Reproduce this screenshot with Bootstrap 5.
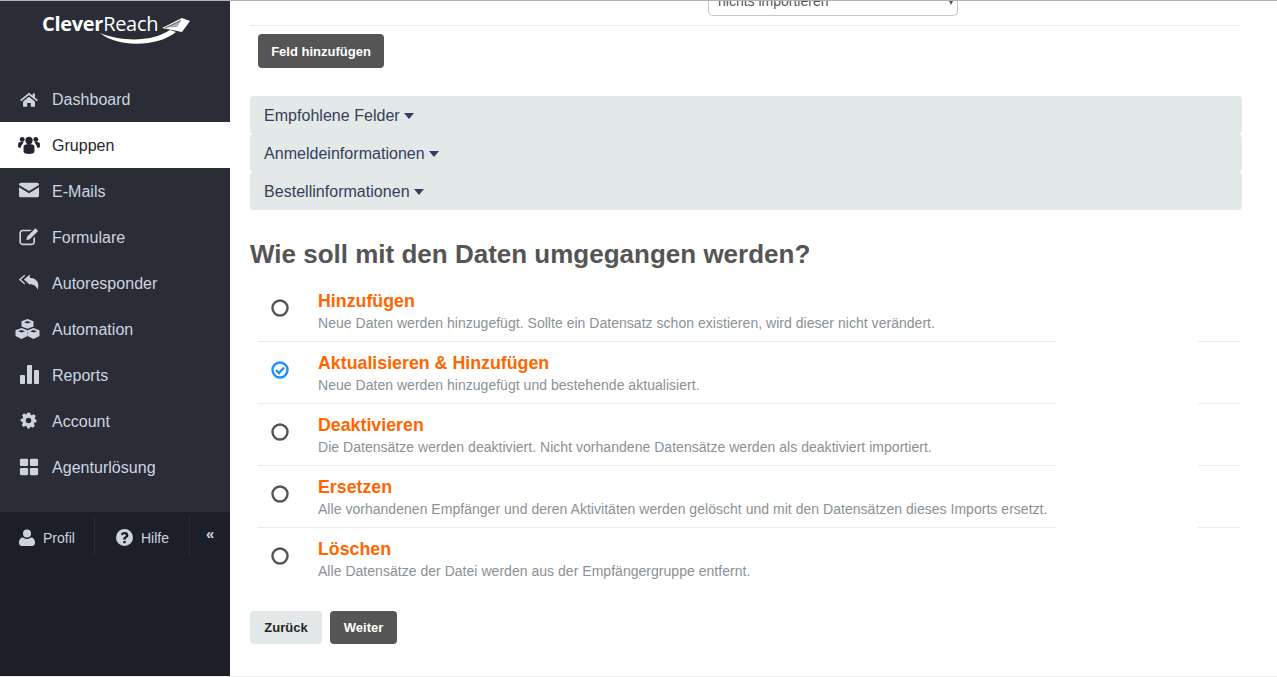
<!DOCTYPE html>
<html lang="de">
<head>
<meta charset="utf-8">
<title>CleverReach</title>
<link rel="stylesheet" href="https://cdn.jsdelivr.net/npm/bootstrap@5.3.0/dist/css/bootstrap.min.css">
<style>
html,body{height:677px;overflow:hidden;background:#fff;font-family:"Liberation Sans",Arial,sans-serif}
.shell{height:677px;border-top:1px solid #b2b2b2;border-bottom:1px solid #ececec}
.side{width:230px;flex:none;background:#2a2d36;height:675px}
.brand{height:75px;color:#fff;padding:9px 0 0 42px}
.logo-t{font-family:"Open Sans",sans-serif;font-size:20px;line-height:28px;letter-spacing:-.3px;color:#fff}
.logo-t b{font-weight:700}
.logo-g{left:0;top:0}
.menu-i{height:46px;padding:2px 0 0 18px;color:#cdd4e0;font-size:16px;text-decoration:none;letter-spacing:.03px}
.menu-i svg{width:22px;height:20px;flex:none;margin:-2px 12px 0 0;fill:#cdd4e0}
.menu-i.on{background:#fff;color:#23262e}
.menu-i.on svg{fill:#23262e}
.menu-i svg.wide{margin-left:-3px;width:25px}
.foot{margin-top:auto;height:164px;background:#1c1f27;color:#cdd4e0;font-size:14px;padding-top:4px}
.foot-c{height:40px;border-right:1px solid #282b33;padding-top:4px}
.foot-c svg{fill:#cdd4e0;margin-top:-2px}
.c1{width:95px;padding-left:19px}
.c2{width:95px;padding-left:21px}
.c3{width:39px;padding:0 0 3px 16px;border-right:0;font-size:15px;font-weight:700}
.work{flex:1;padding:0 37px 0 20px;min-width:0}
.top-r{height:25px;border-bottom:1px solid #ebebeb;margin-bottom:8px;overflow:hidden;position:relative}
.sel-x{width:250px;height:34px;margin-left:458px;margin-top:-19px;border:1px solid #c4c4c4;border-radius:0 0 5px 5px;border-top:0;font-size:14px;color:#555;padding:0 0 0 9px;line-height:17px;background:#fff}
.sel-s{position:relative;top:3px}
.sel-a{width:0;height:0;border-left:3.5px solid transparent;border-right:3.5px solid transparent;border-top:6px solid #555;margin-right:3px;position:relative;top:3px}
.btn-dk{background:#555;color:#fff;font-size:13px;font-weight:700;border:0;border-radius:4px;padding:1px 0 0;height:34px;line-height:33px;width:126px}
.btn-dk:hover{background:#555;color:#fff}
.btn-lt{background:#e3e8e8;color:#24262b;font-size:13px;font-weight:700;border:0;border-radius:4px;padding:1px 0 0;height:33px;line-height:32px;width:72px}
.btn-nx{width:67px;height:33px;line-height:32px}
.acc-w{margin-top:28px;margin-right:-2px}
.acc-b{height:38px;background:#e3e8e8;border-radius:4px;color:#34405a;font-size:16px;padding-left:14px;line-height:39.500px;letter-spacing:.03px}
.acc-b::after{margin-left:4px;vertical-align:2px;border-top-width:6px;border-left-width:5px;border-right-width:5px}
.hd{font-size:26px;font-weight:700;color:#555;margin:0;height:70px;line-height:88px}
.opt-l{margin-left:8px;height:61px;padding-top:10px}
.rad{width:60px;flex:none;padding:8.500px 0 0 13px}
.rad svg{display:block}
.opt-t{font-size:17.800px;font-weight:700;color:#f60;line-height:22px}
.opt-d{font-size:14px;color:#8a9196;line-height:22.500px;white-space:nowrap;letter-spacing:.03px}
.sep-a{margin-left:8px;height:1px}
.sep-a i{display:block;height:1px;background:#ebebeb}
.sep-1{width:799px}
.sep-2{width:42px;margin-left:141px}
.acts{margin-top:22px}
</style>
</head>
<body>
<div class="shell d-flex">
  <nav class="side d-flex flex-column">
    <div class="brand position-relative">
      <span class="logo-t"><b>Clever</b>Reach</span>
      <svg class="logo-g position-absolute" width="230" height="75" viewBox="0 0 230 75"><path d="M100 32C120 40 150 42 170 29L176 31C158 46 118 47 100 32Z" fill="#fff"/><path d="M162 27 182 17 190 20 182 31Z" fill="#fff"/><path d="M167 26.500 181 20 177 26Z" fill="#2a2d36" opacity=".4"/><path d="M165 27 181 19.500" stroke="#2a2d36" stroke-width=".8" fill="none"/></svg>
    </div>
    <a class="menu-i d-flex align-items-center" href="#"><svg viewBox="-2.500 -3 29 27"><path d="M12 2 0 12l1.400 1.700L12 5l10.600 8.700L24 12l-4-3.300V3h-3v3.200zM4 14v7h5.500v-5h5v5H20v-7l-8-6.500z"/></svg>Dashboard</a>
    <a class="menu-i on d-flex align-items-center" href="#"><svg viewBox="0 0 24 22"><circle cx="12" cy="6" r="4"/><circle cx="4.500" cy="5" r="2.700"/><circle cx="19.500" cy="5" r="2.700"/><path d="M6 13c0-2 2-3 6-3s6 1 6 3v5c0 2-2 3-6 3s-6-1-6-3zM0 10c0-1.500 1-2.300 3-2.300h3c-.6.800-1 1.500-1 2.500-1.200.8-2 2-2 3.800H1c-.6 0-1-.5-1-1zM24 10c0-1.500-1-2.300-3-2.300h-3c.6.800 1 1.500 1 2.500 1.200.8 2 2 2 3.800h2c.6 0 1-.5 1-1z"/></svg>Gruppen</a>
    <a class="menu-i d-flex align-items-center" href="#"><svg viewBox="-1 0 24 22"><path d="M2 2h18c1 0 2 1 2 2v.5L11 11 0 4.500V4c0-1 1-2 2-2zM0 7l11 6.500L22 7v9c0 1-1 2-2 2H2c-1 0-2-1-2-2z"/></svg>E-Mails</a>
    <a class="menu-i d-flex align-items-center" href="#"><svg viewBox="-1 0 24 22"><path d="M4 3h10l-2 1.800H4c-1 0-1.800.8-1.800 1.800v9.800c0 1 .8 1.800 1.800 1.800h10c1 0 1.800-.8 1.800-1.800v-4l1.800-1.800v6c0 2-1.600 3.400-3.600 3.400H4c-2 0-3.600-1.400-3.600-3.400V6.600C.4 4.600 2 3 4 3z"/><path d="M18 1.500 21 4.500 12 13.500 8 14.500 9 10.500z"/></svg>Formulare</a>
    <a class="menu-i d-flex align-items-center" href="#"><svg viewBox="-1 0 26 22"><path d="M7 1v2L2.500 7 7 11v2L0 7z"/><path d="M13 1v4c6 0 10 3 10 9 0 2-.6 3.500-1 5-1-4-4-6.500-9-6.500V13L6 7z"/></svg>Autoresponder</a>
    <a class="menu-i d-flex align-items-center" href="#"><svg class="wide" viewBox="1 1 24 20"><path d="M13 1l6 2.300v5.200l-6 2.300-6-2.300V3.300zM13 3 9.500 4.300 13 5.600l3.500-1.300z" fill-rule="evenodd"/><path d="M7 10l6 2.300v5.700l-6 3-6-3v-5.700zM7 12 3.500 13.300 7 14.600l3.500-1.300z" fill-rule="evenodd"/><path d="M19 10l6 2.300v5.700l-6 3-6-3v-5.700zM19 12l-3.500 1.300 3.500 1.300 3.500-1.300z" fill-rule="evenodd"/></svg>Automation</a>
    <a class="menu-i d-flex align-items-center" href="#"><svg viewBox="0 0 22 20"><rect x="2" y="10" width="5" height="9" rx="1"/><rect x="9" y="0" width="5" height="19" rx="1"/><rect x="16" y="5" width="5" height="14" rx="1"/></svg>Reports</a>
    <a class="menu-i d-flex align-items-center" href="#"><svg viewBox="-2 -2 26 24"><path fill-rule="evenodd" d="M9 1h4l.6 2.600 1.700.7 2.300-1.400 2.500 2.500-1.400 2.300.7 1.700L21 10v3l-2.600.6-.7 1.700 1.400 2.300-2.500 2.500-2.300-1.400-1.700.7L12.500 21h-3l-.6-2.600-1.700-.7-2.300 1.400-2.500-2.500 1.400-2.300-.7-1.700L1 12V9l2.600-.6.7-1.700L2.900 4.400l2.500-2.500 2.300 1.400 1.100-.4zM11 7.500a3.500 3.500 0 1 0 0 7 3.500 3.500 0 0 0 0-7z" transform="translate(0 -1) scale(.95)"/></svg>Account</a>
    <a class="menu-i d-flex align-items-center" href="#"><svg viewBox="-1 -1 24 22"><rect x="1" y="1" width="9" height="8" rx="1.500"/><rect x="12" y="1" width="9" height="8" rx="1.500"/><rect x="1" y="11" width="9" height="8" rx="1.500"/><rect x="12" y="11" width="9" height="8" rx="1.500"/></svg>Agenturlösung</a>
    <div class="foot d-flex align-items-start">
      <div class="foot-c c1 d-flex align-items-center gap-2"><svg width="16" height="17" viewBox="0 0 16 17"><circle cx="8" cy="4.500" r="4"/><path d="M0 14c0-4 2-5.500 4-5.500 1 .9 2.400 1.400 4 1.400s3-.5 4-1.400c2 0 4 1.500 4 5.500 0 2-1.500 3-3 3H3c-1.500 0-3-1-3-3z"/></svg>Profil</div>
      <div class="foot-c c2 d-flex align-items-center gap-2"><svg width="17" height="17" viewBox="0 0 17 17"><path fill-rule="evenodd" d="M8.500 0a8.500 8.500 0 1 1 0 17 8.500 8.500 0 0 1 0-17zM7.300 12v2.200h2.400V12zM8.700 3C6.800 3 5.500 3.900 4.800 5.200l1.600 1.200c.5-.7 1-1.200 2-1.200.8 0 1.400.4 1.400 1 0 .7-.5 1-1.300 1.500-.9.500-1.200 1.200-1.200 2.200v.8h2.400v-.6c0-.5.2-.7.9-1.100 1-.6 1.800-1.300 1.800-2.800C12.400 4.100 10.600 3 8.700 3z"/></svg>Hilfe</div>
      <div class="foot-c c3 d-flex align-items-center">«</div>
    </div>
  </nav>
  <main class="work">
    <div class="top-r"><div class="sel-x d-flex justify-content-between align-items-center"><span class="sel-s">nichts importieren</span><span class="sel-a"></span></div></div>
    <button class="btn btn-dk ms-2" type="button">Feld hinzufügen</button>
    <div class="acc-w">
      <div><span class="acc-b dropdown-toggle d-block">Empfohlene Felder</span></div>
      <div><span class="acc-b dropdown-toggle d-block">Anmeldeinformationen</span></div>
      <div><span class="acc-b dropdown-toggle d-block">Bestellinformationen</span></div>
    </div>
    <h2 class="hd">Wie soll mit den Daten umgegangen werden?</h2>
    <div class="opt-l d-flex"><div class="rad"><svg width="18" height="18" viewBox="0 0 18 18"><circle cx="9" cy="9" r="7.500" fill="none" stroke="#555" stroke-width="2.400"/></svg></div><div><div class="opt-t">Hinzufügen</div><div class="opt-d">Neue Daten werden hinzugefügt. Sollte ein Datensatz schon existieren, wird dieser nicht verändert.</div></div></div>
    <div class="sep-a d-flex"><i class="sep-1"></i><i class="sep-2"></i></div>
    <div class="opt-l d-flex"><div class="rad"><svg width="18" height="18" viewBox="0 0 18 18"><circle cx="9" cy="9" r="7.500" fill="none" stroke="#1e90f5" stroke-width="2.400"/><path d="M5 9.200 8 12l5-5.500" fill="none" stroke="#1e90f5" stroke-width="2.300"/></svg></div><div><div class="opt-t">Aktualisieren &amp; Hinzufügen</div><div class="opt-d">Neue Daten werden hinzugefügt und bestehende aktualisiert.</div></div></div>
    <div class="sep-a d-flex"><i class="sep-1"></i><i class="sep-2"></i></div>
    <div class="opt-l d-flex"><div class="rad"><svg width="18" height="18" viewBox="0 0 18 18"><circle cx="9" cy="9" r="7.500" fill="none" stroke="#555" stroke-width="2.400"/></svg></div><div><div class="opt-t">Deaktivieren</div><div class="opt-d">Die Datensätze werden deaktiviert. Nicht vorhandene Datensätze werden als deaktiviert importiert.</div></div></div>
    <div class="sep-a d-flex"><i class="sep-1"></i><i class="sep-2"></i></div>
    <div class="opt-l d-flex"><div class="rad"><svg width="18" height="18" viewBox="0 0 18 18"><circle cx="9" cy="9" r="7.500" fill="none" stroke="#555" stroke-width="2.400"/></svg></div><div><div class="opt-t">Ersetzen</div><div class="opt-d">Alle vorhandenen Empfänger und deren Aktivitäten werden gelöscht und mit den Datensätzen dieses Imports ersetzt.</div></div></div>
    <div class="sep-a d-flex"><i class="sep-1"></i><i class="sep-2"></i></div>
    <div class="opt-l d-flex"><div class="rad"><svg width="18" height="18" viewBox="0 0 18 18"><circle cx="9" cy="9" r="7.500" fill="none" stroke="#555" stroke-width="2.400"/></svg></div><div><div class="opt-t">Löschen</div><div class="opt-d">Alle Datensätze der Datei werden aus der Empfängergruppe entfernt.</div></div></div>
    <div class="acts d-flex gap-2"><button class="btn btn-lt" type="button">Zurück</button><button class="btn btn-dk btn-nx" type="button">Weiter</button></div>
  </main>
</div>
<script src="https://cdn.jsdelivr.net/npm/bootstrap@5.3.0/dist/js/bootstrap.bundle.min.js"></script>
</body>
</html>
